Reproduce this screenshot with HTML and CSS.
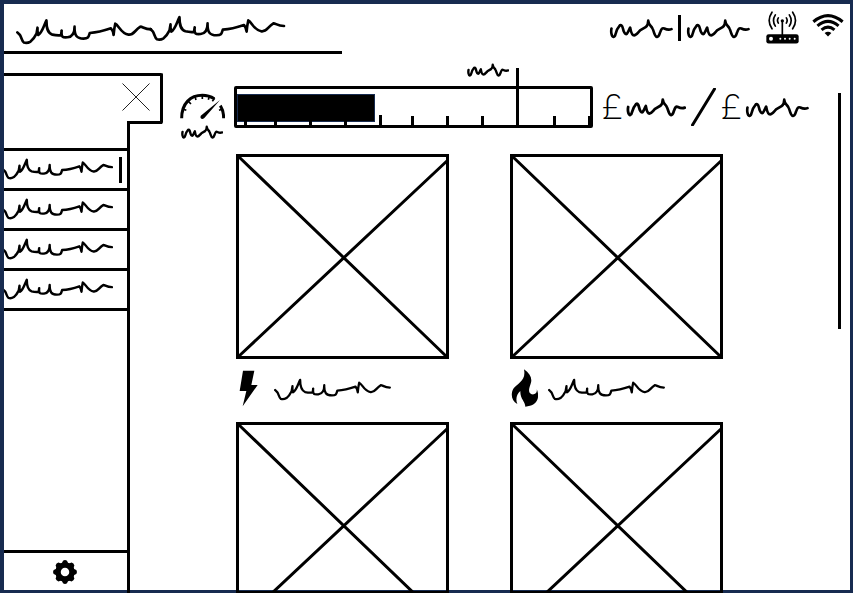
FILE: index.html
```html
<!DOCTYPE html>
<html lang="en">
<head>
<meta charset="utf-8">
<title>Energy dashboard</title>
<link rel="stylesheet" href="styles.css">
</head>
<body>
<svg class="defs" aria-hidden="true">
  <symbol id="long" viewBox="48 56 412 80">
    <path id="long-path" d="M52 98L60 106C64 112 66 126 72 129Q82 132 92 126C102 118 106 110 110 102L113 84V94L115 106C127 100 132 78 140 62C140 85 143 100 158 105Q170 108 184 107L186 93C184 115 190 114 204 113C220 111 225 96 225 81C224 108 232 117 252 117C268 117 267 112 271 100C290 99 318 92 335 86Q341 92 343 106L345 88L348 72C358 76 366 103 388 105C404 107 406 92 424 81C430 80 436 89 456 89"/>
  </symbol>
  <symbol id="short" viewBox="60 50 194 64">
    <path d="M67 82C65 92 67 107 73 108Q78 107 79 100C82 86 86 80 93 72C101 68 102 86 105 92Q110 102 114 98C119 92 120 86 124 79C126 90 128 103 136 103C142 103 148 94 154 88L171 78Q179 72 179 58C181 74 187 71 192 82C198 94 198 107 206 108C213 107 213 98 216 92C219 84 221 79 228 82Q240 88 250 84"/>
  </symbol>
  <symbol id="cross" viewBox="0 0 213 205">
    <path d="M1.500 1.500H211.500V203.500H1.500ZM2 2L211 203M212 6L2 203"/>
  </symbol>
</svg>
<div class="page">
  <header class="header">
    <div class="title">
      <svg class="scribble title-scribble" viewBox="48 46 816 90" role="img" aria-label="Title">
        <use href="#long-path"/><use href="#long-path" transform="translate(402 -10)"/>
      </svg>
    </div>
    <div class="status">
      <svg class="scribble short"><use href="#short"/></svg>
      <span class="bar"></span>
      <svg class="scribble short"><use href="#short"/></svg>
      <svg class="router" viewBox="0 0 99 98" role="img" aria-label="Router">
        <rect x="1" y="69" width="97" height="28" rx="7"/>
        <g fill="none" stroke="#000" stroke-width="5" stroke-linecap="round">
          <path d="M49 30V70"/>
          <path d="M37 20Q32 28 37 36M61 20Q66 28 61 36M28 11Q17 28 28 45M70 11Q81 28 70 45M18 3Q1 28 18 53M80 3Q97 28 80 53"/>
        </g>
        <circle cx="49" cy="29" r="5"/>
        <g fill="#fff"><circle cx="15" cy="83" r="6"/><circle cx="43" cy="83" r="3"/><circle cx="57" cy="83" r="3"/><circle cx="71" cy="83" r="3"/><circle cx="86" cy="83" r="3"/></g>
      </svg>
      <svg class="wifi" viewBox="0 0 94 66" role="img" aria-label="Wi-Fi">
        <g fill="none" stroke="#000" stroke-width="9"><path d="M4 22Q47-14 90 22"/><path d="M16 34Q47 8 78 34"/><path d="M28 46Q47 30 66 46"/></g>
        <path d="M37 55Q47 47 57 55L47 65Z"/>
      </svg>
    </div>
  </header>

  <div class="workspace">
    <aside class="sidebar">
      <div class="tab">
        <button class="close" type="button" aria-label="Close menu">
          <svg viewBox="0 0 28 28"><path d="M.5.5L27.500 27.500M27.500.5L.5 27.500"/></svg>
        </button>
      </div>
      <div class="panel">
        <nav class="menu">
          <a href="#one" aria-label="Menu item 1" aria-current="page"><svg class="scribble menu-scribble"><use href="#long"/></svg><span class="bar"></span></a>
          <a href="#two" aria-label="Menu item 2"><svg class="scribble menu-scribble"><use href="#long"/></svg></a>
          <a href="#three" aria-label="Menu item 3"><svg class="scribble menu-scribble"><use href="#long"/></svg></a>
          <a href="#four" aria-label="Menu item 4"><svg class="scribble menu-scribble"><use href="#long"/></svg></a>
        </nav>
        <button class="settings" type="button" aria-label="Settings">
          <svg viewBox="-12 -12 24 24">
            <circle r="7" fill="none" stroke="#000" stroke-width="5.500"/>
            <path id="tooth" d="M-3.500-8L-2-11.300Q0-12.500 2-11.300L3.500-8ZM-3.500 8L-2 11.300Q0 12.500 2 11.300L3.500 8Z"/>
            <use href="#tooth" transform="rotate(45)"/><use href="#tooth" transform="rotate(90)"/><use href="#tooth" transform="rotate(135)"/>
          </svg>
        </button>
      </div>
    </aside>

    <main class="main">
      <section class="summary">
        <div class="gauge">
          <svg class="dial" viewBox="0 0 135 78" role="img" aria-label="Usage gauge">
            <path fill="none" stroke="#000" stroke-width="9" d="M5 76C5 30 32 7 67 7Q87 7 103 17M121 38Q131 54 131 76"/>
            <path fill="none" stroke="#000" stroke-width="5" d="M8 48L19 52M25 25L33 33M45 11L48 21M67 7V18M88 10L85 20M128 48L117 52M104 16L97 25"/>
            <path d="M120 21L73 75Q66 81 62 75Q60 69 65 66Z"/>
          </svg>
          <svg class="scribble tiny"><use href="#short"/></svg>
        </div>
        <div class="meter">
          <progress value="39" max="100" aria-label="Budget used"></progress>
          <svg class="ticks" viewBox="0 0 353 10" preserveAspectRatio="none">
            <path d="M8.500 0V10M38.500 0V10M73.500 0V10M108.500 0V10M143.500 0V10M175.500 1V10M210.500 1V10M245.500 1V10M280.500 1V10M317.500 1V10M352.500 1V10"/>
          </svg>
          <div class="limit">
            <svg class="scribble tiny"><use href="#short"/></svg>
            <span class="marker"></span>
          </div>
        </div>
        <div class="cost">
          <span class="pound">£</span>
          <svg class="scribble amount"><use href="#short"/></svg>
          <svg class="slash" viewBox="0 0 25 38"><path d="M1.500 37L23.500 1"/></svg>
          <span class="pound">£</span>
          <svg class="scribble short"><use href="#short"/></svg>
        </div>
      </section>

      <section class="cards">
        <figure class="card">
          <svg class="picture" viewBox="0 0 213 205"><use href="#cross"/></svg>
          <figcaption>
            <svg class="icon" viewBox="0 0 84 114" role="img" aria-label="Electricity"><path d="M21 5H55L46 48H65L20 112L31 66H11Z"/></svg>
            <svg class="scribble caption"><use href="#long"/></svg>
          </figcaption>
        </figure>
        <figure class="card">
          <svg class="picture" viewBox="0 0 213 205"><use href="#cross"/></svg>
          <figcaption>
            <svg class="icon" viewBox="0 0 84 114" role="img" aria-label="Gas"><path d="M42 1C60 14 68 28 62 44C56 60 54 72 65 76C76 78 83 70 80 59C89 80 85 104 60 110L46 113C46 97 30 90 31 66C20 75 16 91 22 105C4 94 1 74 11 58C23 42 49 36 42 1Z"/></svg>
            <svg class="scribble caption"><use href="#long"/></svg>
          </figcaption>
        </figure>
        <figure class="card cut"><svg class="picture" viewBox="0 0 213 205"><use href="#cross"/></svg></figure>
        <figure class="card cut"><svg class="picture" viewBox="0 0 213 205"><use href="#cross"/></svg></figure>
      </section>
    </main>
    <div class="rail"></div>
  </div>
</div>
</body>
</html>
```
FILE: styles.css
```css
* { box-sizing: border-box; }

body {
  margin: 0;
  background: #fff;
  color: #000;
  font-family: Lato, "Liberation Sans", sans-serif;
}

svg { display: block; flex: none; }

button {
  margin: 0;
  border: 0;
  padding: 0;
  background: none;
}

.defs {
  position: absolute;
  width: 0;
  height: 0;
}

.page {
  display: flex;
  flex-direction: column;
  height: 100vh;
  border: 4px solid #172b50;
  border-width: 4px 3px 3px 4px;
}

.scribble {
  fill: none;
  stroke: #000;
  stroke-width: 8;
  stroke-linecap: round;
  stroke-linejoin: round;
}

.bar {
  flex: none;
  width: 3px;
  height: 26px;
  background: #000;
}

/* Header */
.header {
  display: flex;
  justify-content: space-between;
  align-items: flex-start;
}

.title {
  flex: 0 1 40%;
  height: 50px;
  padding: 11px 0 0 12px;
  border-bottom: 3px solid #000;
}

.title-scribble { width: 270px; height: 30px; }

.status {
  display: flex;
  align-items: center;
  gap: 5px;
  height: 48px;
  padding-right: 6px;
}

.short { width: 64px; height: 21px; }
.amount { width: 60px; height: 20px; stroke-width: 9; }
.tiny { width: 42px; height: 14px; stroke-width: 11; }
.router { width: 33px; height: 33px; margin: 0 0 2px 11px; }
.wifi { width: 32px; height: 23px; margin: 0 0 6px 8px; }

.workspace {
  display: flex;
  flex: 1;
  min-height: 0;
}

/* Sidebar */
.sidebar {
  display: flex;
  flex: none;
  flex-direction: column;
  width: 126px;
  margin-bottom: -3px;
  padding-top: 19px;
}

.tab {
  position: relative;
  display: flex;
  justify-content: flex-end;
  width: 159px;
  height: 51px;
  padding: 7px 10px;
  border-top: 3px solid #000;
  border-right: 3px solid #000;
  border-radius: 0 2px 2px 0;
}

.tab::after {
  content: "";
  position: absolute;
  right: -2px;
  bottom: 0;
  width: 35px;
  height: 3px;
  background: #000;
}

.close { width: 28px; height: 28px; }
.close svg { stroke: #222; stroke-width: 1; }

.panel {
  display: flex;
  flex: 1;
  flex-direction: column;
  justify-content: space-between;
  padding-top: 24px;
  border-right: 3px solid #000;
}

.menu { border-bottom: 3px solid #000; }

.menu a {
  display: flex;
  align-items: center;
  gap: 6px;
  height: 40px;
  border-top: 3px solid #000;
  overflow: hidden;
}

.menu-scribble {
  width: 111px;
  height: 22px;
  margin: 0 0 2px -2px;
  stroke-width: 9;
}

.settings {
  display: flex;
  justify-content: center;
  height: 43px;
  padding-top: 7px;
  border-top: 3px solid #000;
}

.settings svg { width: 24px; height: 24px; margin-right: 1px; }

/* Summary */
.main {
  display: flex;
  flex: 1;
  flex-direction: column;
  min-width: 0;
  margin-bottom: -3px;
  padding: 32px 28px 0 50px;
}

.summary {
  display: flex;
  align-items: flex-start;
  height: 68px;
}

.gauge { width: 45px; padding-top: 7px; }
.dial { width: 45px; height: 26px; }
.gauge .tiny { margin: 6px 0 0 1px; }

.meter {
  position: relative;
  flex: 1;
  height: 42px;
  margin: 0 9px;
  padding: 5px 0;
  border: 3px solid #000;
  border-radius: 2px;
}

progress {
  display: block;
  appearance: none;
  width: 100%;
  height: 28px;
  border: 0;
  background: #fff;
}

progress::-webkit-progress-bar { background: #fff; }

progress::-webkit-progress-value {
  border: 1px solid #172b50;
  background: #000;
}

.ticks {
  position: absolute;
  bottom: 0;
  left: 0;
  width: 100%;
  height: 10px;
  overflow: visible;
  stroke: #000;
  stroke-width: 3;
}

.limit {
  position: absolute;
  right: 20%;
  bottom: 0;
  display: flex;
  align-items: flex-start;
  gap: 7px;
}

.limit .tiny { margin-top: -5px; }

.marker {
  width: 3px;
  height: 57px;
  background: #000;
}

.cost {
  display: flex;
  align-items: center;
  gap: 5px;
  height: 42px;
  padding-right: 1px;
}

.pound {
  width: 19px;
  font-size: 35px;
  font-weight: 300;
  line-height: 38px;
  padding-bottom: 4px;
}

.slash {
  width: 25px;
  height: 38px;
  stroke: #000;
  stroke-width: 3;
  stroke-linecap: round;
}

/* Cards */
.cards {
  display: grid;
  flex: 1;
  grid-template-columns: 1fr 1fr;
  grid-template-rows: auto 1fr;
  column-gap: 61px;
  min-height: 0;
  margin: 0 87px 0 56px;
}

.card { min-width: 0; min-height: 0; margin: 0; }

.picture {
  width: 100%;
  fill: none;
  stroke: #000;
  stroke-width: 3;
}

.cut {
  overflow: hidden;
  border-bottom: 2px solid #000;
}

.card figcaption {
  display: flex;
  align-items: center;
  gap: 10px;
  height: 63px;
}

.icon { width: 28px; height: 38px; margin-bottom: 6px; }
.caption { width: 117px; height: 23px; margin-bottom: 2px; }

.rail {
  flex: none;
  width: 3px;
  height: 44%;
  margin: 39px 9px 0 0;
  background: #000;
}
```
